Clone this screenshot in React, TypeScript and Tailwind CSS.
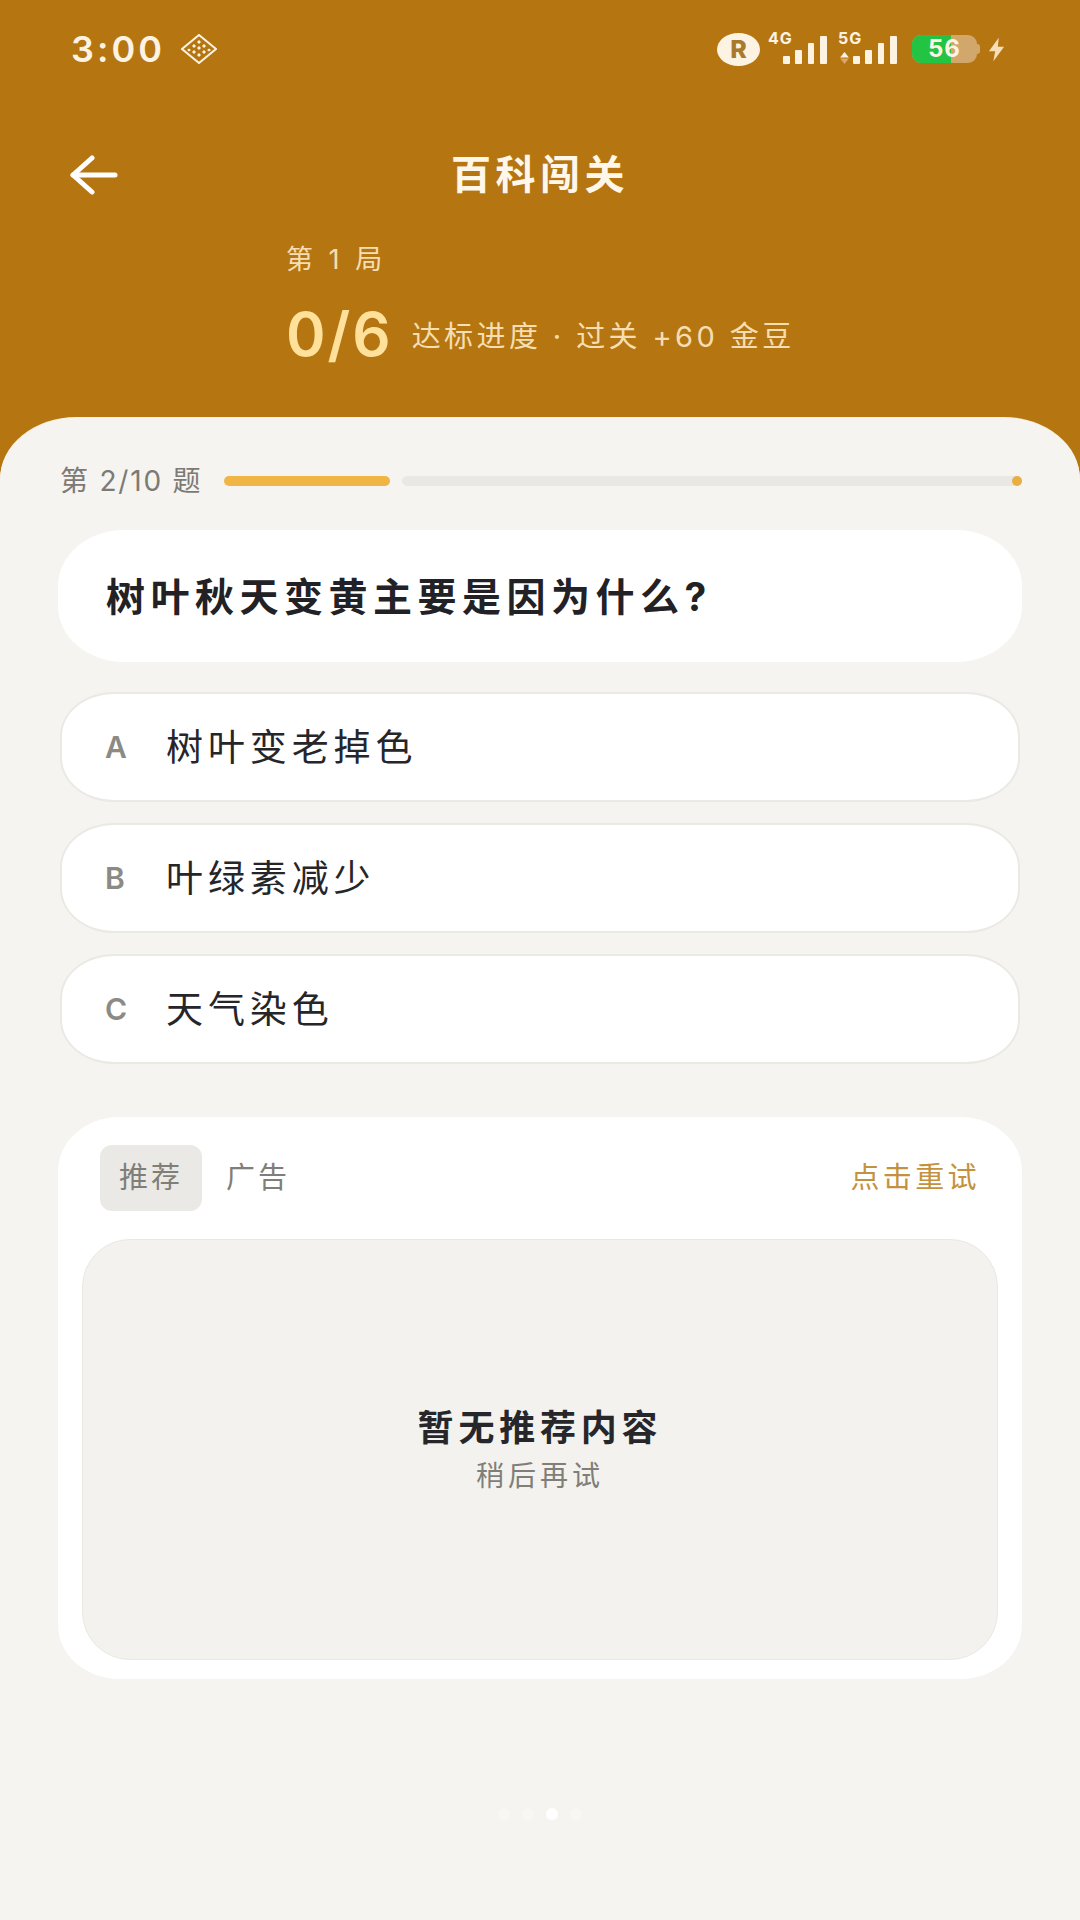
const OPTIONS = [
  { key: 'A', text: '树叶变老掉色' },
  { key: 'B', text: '叶绿素减少' },
  { key: 'C', text: '天气染色' },
];

function SignalBars({ label, arrows }: { label: string; arrows?: boolean }) {
  return (
    <div className="relative h-[30px] w-[59px]">
      <span className="absolute left-0 top-[-4px] text-[16px] font-bold leading-[16px] tracking-[1px] text-[#fdf3e3]">{label}</span>
      {arrows && (
        <svg className="absolute left-[2px] bottom-0" width="9" height="12" viewBox="0 0 8 11">
          <path d="M4 0 8 5H0z" fill="#fdf3e3" />
          <path d="M4 11 8 6H0z" fill="#d9a869" />
        </svg>
      )}
      <svg className="absolute right-0 bottom-0" width="44" height="28" viewBox="0 0 44 28" fill="#fdf3e3">
        <rect x="0" y="20" width="7" height="8" rx="1" />
        <rect x="12" y="14" width="7" height="14" rx="1" />
        <rect x="25" y="7" width="6" height="21" rx="1" />
        <rect x="37" y="0" width="7" height="28" rx="1" />
      </svg>
    </div>
  );
}

function StatusBar() {
  return (
    <div className="flex h-[98px] items-center justify-between pl-[71px] pr-[75px] text-[#fdf3e3]">
      <div className="flex items-center gap-[16px]">
        <span className="text-[36px] font-semibold leading-none tracking-[3px]">3:00</span>
        <svg width="36" height="30" viewBox="0 0 36 30" fill="none" stroke="#fdf3e3" strokeWidth="2">
          <path d="M18 1 35 15 18 29 1 15z" />
          <path
            d="M18 6 20 8 18 10 16 8zM13 10 15 12 13 14 11 12zM23 10 25 12 23 14 21 12zM8 14.500 10 16 8 17.500 6 16zM18 12 20 14 18 16 16 14zM28 14.500 30 16 28 17.500 26 16zM13 16 15 18 13 20 11 18zM23 16 25 18 23 20 21 18zM18 19 20 21 18 23 16 21z"
            fill="#fdf3e3"
            stroke="none"
          />
        </svg>
      </div>
      <div className="flex items-center">
        <div className="flex h-[33px] w-[43px] items-center justify-center rounded-[50%] bg-[#fdf3e3] text-[25px] font-extrabold leading-none text-[#a97a2c]">R</div>
        <div className="ml-[8px]"><SignalBars label="4G" /></div>
        <div className="ml-[11px]"><SignalBars label="5G" arrows /></div>
        <div className="relative ml-[15px] h-[28px] w-[65px] overflow-hidden rounded-[9px] bg-[#d2a76c]">
          <div className="h-full w-[39px] bg-[#23c343]" />
          <span className="absolute inset-0 flex items-center justify-center text-[24px] font-bold leading-none tracking-[1px] text-[#fdf3e3]">56</span>
        </div>
        <div className="h-[10px] w-[3px] rounded-r-full bg-[#d2a76c]" />
        <svg className="ml-[8px]" width="17" height="25" viewBox="0 0 19 26" fill="#f5dfb8">
          <path d="M12 0 1 15h7l-2 11L18 10h-7z" />
        </svg>
      </div>
    </div>
  );
}

function BackArrow() {
  return (
    <svg width="48" height="40" viewBox="0 0 48 40" fill="none" stroke="#fff" strokeWidth="5" strokeLinecap="round" strokeLinejoin="round">
      <path d="M3 20H45" />
      <path d="M22 3 3 20 22 37" />
    </svg>
  );
}

function Hero() {
  return (
    <div className="h-[510px] bg-[#b57612]">
      <StatusBar />
      <div className="mt-[52px] grid h-[50px] grid-cols-[1fr_auto_1fr] items-center">
        <div className="pl-[70px]">
          <BackArrow />
        </div>
        <h1 className="text-[40px] font-bold leading-none tracking-[4.500px] text-[#fff8ea]">百科闯关</h1>
      </div>
      <div className="ml-[286px] mt-[42px]">
        <p className="text-[27px] leading-[36px] tracking-[4px] text-[#f6deb2]">第 1 局</p>
        <div className="mt-[20px] flex items-center">
          <span className="text-[60px] font-semibold leading-[72px] tracking-[2px] text-[#ffe19b]">0/6</span>
          <span className="ml-[19px] mt-[4px] text-[29px] leading-none tracking-[3.400px] text-[#f6deb2]">达标进度 · 过关 +60 金豆</span>
        </div>
      </div>
    </div>
  );
}

function ProgressRow() {
  return (
    <div className="flex h-[44px] items-center">
      <span className="w-[168px] pl-[2px] text-[28px] leading-none tracking-[1.800px] text-[#7c7a74]">第 2/10 题</span>
      <div className="ml-[-2px] h-[10px] w-[166px] rounded-full bg-[#f0b545]" />
      <div className="relative ml-[12px] h-[10px] flex-1 rounded-full bg-[#e9e8e4]">
        <div className="absolute right-0 top-0 size-[10px] rounded-full bg-[#e9ae42]" />
      </div>
    </div>
  );
}

function OptionRow({ optionKey, text }: { optionKey: string; text: string }) {
  return (
    <div className="mx-[2px] flex h-[110px] items-center rounded-[54px/44px] border-2 border-[#ebe9e4] bg-white pl-[43px]">
      <span className="w-[61px] text-[30px] font-semibold leading-none text-[#8b8a84]">{optionKey}</span>
      <span className="text-[37px] leading-none tracking-[4.900px] text-[#26262a]">{text}</span>
    </div>
  );
}

function RecommendCard() {
  return (
    <div className="mt-[53px] h-[562px] rounded-[62px/54px] bg-white px-[24px] pt-[28px]">
      <div className="flex h-[66px] items-center">
        <div className="ml-[18px] flex h-[66px] w-[102px] items-center justify-center rounded-[12px] bg-[#eae9e5] text-[29px] tracking-[3px] text-[#7f7e79]">推荐</div>
        <span className="ml-[24px] text-[29px] tracking-[3px] text-[#7f7e79]">广告</span>
        <span className="ml-auto mr-[18px] text-[29px] tracking-[3.400px] text-[#c4923f]">点击重试</span>
      </div>
      <div className="mt-[28px] flex h-[421px] flex-col items-center justify-center rounded-[48px] border border-[#eae8e3] bg-[#f3f2ee]">
        <p className="text-[36px] font-semibold leading-[46px] tracking-[4.800px] text-[#27272b]">暂无推荐内容</p>
        <p className="mt-[7px] text-[28px] leading-[36px] tracking-[4px] text-[#7f7e79]">稍后再试</p>
      </div>
    </div>
  );
}

function PagerDots() {
  return (
    <div className="mt-[129px] flex justify-center gap-[12px]">
      <div className="size-[12px] rounded-full bg-[#f8f7f4]" />
      <div className="size-[12px] rounded-full bg-[#f8f7f4]" />
      <div className="size-[12px] rounded-full bg-white" />
      <div className="size-[12px] rounded-full bg-[#f8f7f4]" />
    </div>
  );
}

export default function App() {
  return (
    <div className="h-[1920px] w-[1080px] overflow-hidden bg-[#f5f4f0] font-['Inter','Noto_Sans_CJK_SC',sans-serif]">
      <Hero />
      <main className="relative mt-[-92px] h-[1502px] rounded-t-[76px_62px] bg-[#f5f4f0] px-[58px] pt-[41px] shadow-[0_-1px_0_#fbeeda]">
        <ProgressRow />
        <div className="mt-[27px] flex h-[132px] items-center rounded-[66px/56px] bg-white pl-[48px]">
          <h2 className="text-[39px] font-bold leading-none tracking-[5.500px] text-[#222226]">树叶秋天变黄主要是因为什么?</h2>
        </div>
        <div className="mt-[30px] flex flex-col gap-[21px]">
          {OPTIONS.map((o) => (
            <OptionRow key={o.key} optionKey={o.key} text={o.text} />
          ))}
        </div>
        <RecommendCard />
        <PagerDots />
      </main>
    </div>
  );
}
